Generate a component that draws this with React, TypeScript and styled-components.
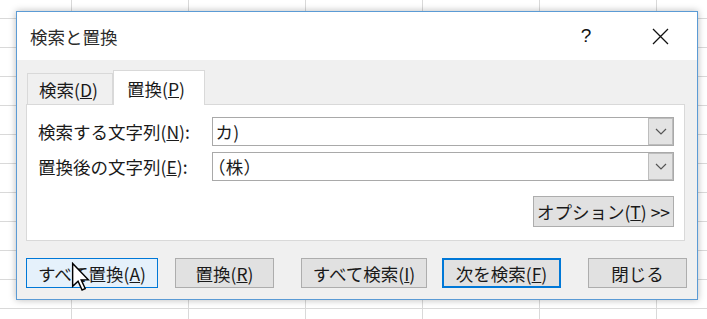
import { createGlobalStyle, styled } from "styled-components";

const GlobalStyle = createGlobalStyle`
  body {
    margin: 0;
    font-family: "Noto Sans CJK JP", "Noto Sans", sans-serif;
    color: #1a1a1a;
  }
`;

const Page = styled.div`
  position: relative;
  width: 707px;
  height: 319px;
  overflow: hidden;
  box-sizing: border-box;
  padding: 11px 0 0 16px;
  background-color: #fff;
  background-image: linear-gradient(to right, #d9d9d9 1px, transparent 1px),
    linear-gradient(to bottom, #d9d9d9 1px, transparent 1px);
  background-size: 117px 29px;
  background-position: 71px 18px;
`;

const Dialog = styled.div`
  width: 682px;
  height: 289px;
  box-sizing: border-box;
  border: 1px solid #5b9bd5;
  background: #f0f0f0;
  box-shadow: 0 0 7px rgba(0, 0, 0, 0.28);
  display: flex;
  flex-direction: column;
`;

const TitleBar = styled.div`
  height: 48px;
  background: #fff;
  display: flex;
  align-items: center;
  padding-left: 13px;
`;

const Title = styled.div`
  flex: 1;
  font-size: 17.5px;
  color: #2a2a2a;
`;

const TitleButton = styled.div`
  width: 74px;
  height: 48px;
  display: flex;
  align-items: center;
  justify-content: center;
  font-family: "Liberation Sans", sans-serif;
  font-size: 19px;
  color: #111;
`;

const Body = styled.div`
  flex: 1;
  padding: 10px 12px 0 9px;
`;

const Tabs = styled.div`
  display: flex;
  align-items: flex-end;
  height: 34px;
  padding-left: 1px;
`;

const Tab = styled.div<{ $active?: boolean; $w: number; $pad: number }>`
  width: ${(p) => p.$w}px;
  height: ${(p) => (p.$active ? 35 : 31)}px;
  box-sizing: border-box;
  padding-left: ${(p) => p.$pad}px;
  display: flex;
  align-items: center;
  font-size: 17.5px;
  background: ${(p) => (p.$active ? "#fff" : "#f0f0f0")};
  border: 1px solid #d9d9d9;
  border-bottom: none;
  margin-bottom: ${(p) => (p.$active ? -1 : 0)}px;
  position: relative;
  z-index: ${(p) => (p.$active ? 1 : 0)};
`;

const Panel = styled.div`
  height: 137px;
  box-sizing: border-box;
  background: #fff;
  border: 1px solid #d9d9d9;
  padding: 12px 10px 0 11px;
`;

const Fields = styled.div`
  display: grid;
  grid-template-columns: 174px 1fr;
  grid-auto-rows: 29px;
  row-gap: 6px;
  align-items: center;
`;

const Label = styled.div`
  font-size: 17.5px;
  white-space: nowrap;
`;

const Combo = styled.div`
  height: 29px;
  box-sizing: border-box;
  border: 1px solid #a9a9a9;
  display: flex;
  align-items: stretch;
`;

const ComboText = styled.div`
  flex: 1;
  padding-left: 3px;
  display: flex;
  align-items: center;
  font-size: 17.5px;
  font-feature-settings: "palt";
  letter-spacing: 1px;
`;

const DropButton = styled.div`
  width: 25px;
  box-sizing: border-box;
  background: #e3e3e3;
  border: 1px solid #bdbdbd;
  display: flex;
  align-items: center;
  justify-content: center;
`;

const OptionsRow = styled.div`
  display: flex;
  justify-content: flex-end;
  margin-top: 15px;
`;

const Button = styled.div<{ $w: number; $h?: number; $ml?: number; $variant?: "hover" | "default" }>`
  width: ${(p) => p.$w}px;
  height: ${(p) => p.$h ?? 30}px;
  margin-left: ${(p) => p.$ml ?? 0}px;
  box-sizing: border-box;
  flex-shrink: 0;
  display: flex;
  align-items: center;
  justify-content: center;
  font-size: 17.5px;
  white-space: nowrap;
  background: ${(p) => (p.$variant === "hover" ? "#e5f1fb" : "#e1e1e1")};
  border: ${(p) =>
    p.$variant === "hover"
      ? "1px solid #0078d7"
      : p.$variant === "default"
      ? "2px solid #0078d7"
      : "1px solid #adadad"};
`;

const Footer = styled.div`
  display: flex;
  margin-top: 17px;
`;

const Cursor = styled.svg`
  position: absolute;
  left: 71px;
  top: 262px;
`;

const Chevron = () => (
  <svg width="12" height="7" viewBox="0 0 12 7">
    <path d="M1 1 L6 6 L11 1" fill="none" stroke="#555" strokeWidth="1.2" />
  </svg>
);

export default function App() {
  return (
    <Page>
      <GlobalStyle />
      <Dialog>
        <TitleBar>
          <Title>検索と置換</Title>
          <TitleButton>?</TitleButton>
          <TitleButton>
            <svg width="17" height="17" viewBox="0 0 17 17">
              <path d="M1 1 L16 16 M16 1 L1 16" stroke="#111" strokeWidth="1.3" />
            </svg>
          </TitleButton>
        </TitleBar>
        <Body>
          <Tabs>
            <Tab $w={86} $pad={11}>
              検索(<u>D</u>)
            </Tab>
            <Tab $active $w={92} $pad={13}>
              置換(<u>P</u>)
            </Tab>
          </Tabs>
          <Panel>
            <Fields>
              <Label>
                検索する文字列(<u>N</u>):
              </Label>
              <Combo>
                <ComboText>カ)</ComboText>
                <DropButton>
                  <Chevron />
                </DropButton>
              </Combo>
              <Label>
                置換後の文字列(<u>E</u>):
              </Label>
              <Combo>
                <ComboText>（株）</ComboText>
                <DropButton>
                  <Chevron />
                </DropButton>
              </Combo>
            </Fields>
            <OptionsRow>
              <Button $w={141} $h={31}>
                オプション(<u>T</u>) &gt;&gt;
              </Button>
            </OptionsRow>
          </Panel>
          <Footer>
            <Button $w={132} $variant="hover">
              すべて置換(<u>A</u>)
            </Button>
            <Button $w={99} $ml={17}>
              置換(<u>R</u>)
            </Button>
            <Button $w={126} $ml={27}>
              すべて検索(<u>I</u>)
            </Button>
            <Button $w={119} $ml={15} $variant="default">
              次を検索(<u>F</u>)
            </Button>
            <Button $w={99} $ml={27}>
              閉じる
            </Button>
          </Footer>
        </Body>
      </Dialog>
      <Cursor width="19" height="30" viewBox="0 0 13 21">
        <path
          d="M1 1 L1 17 L4.8 13.4 L7.6 19.6 L9.8 18.6 L7 12.5 L12 12.5 Z"
          fill="#fff"
          stroke="#000"
          strokeWidth="1"
          strokeLinejoin="miter"
        />
      </Cursor>
    </Page>
  );
}
